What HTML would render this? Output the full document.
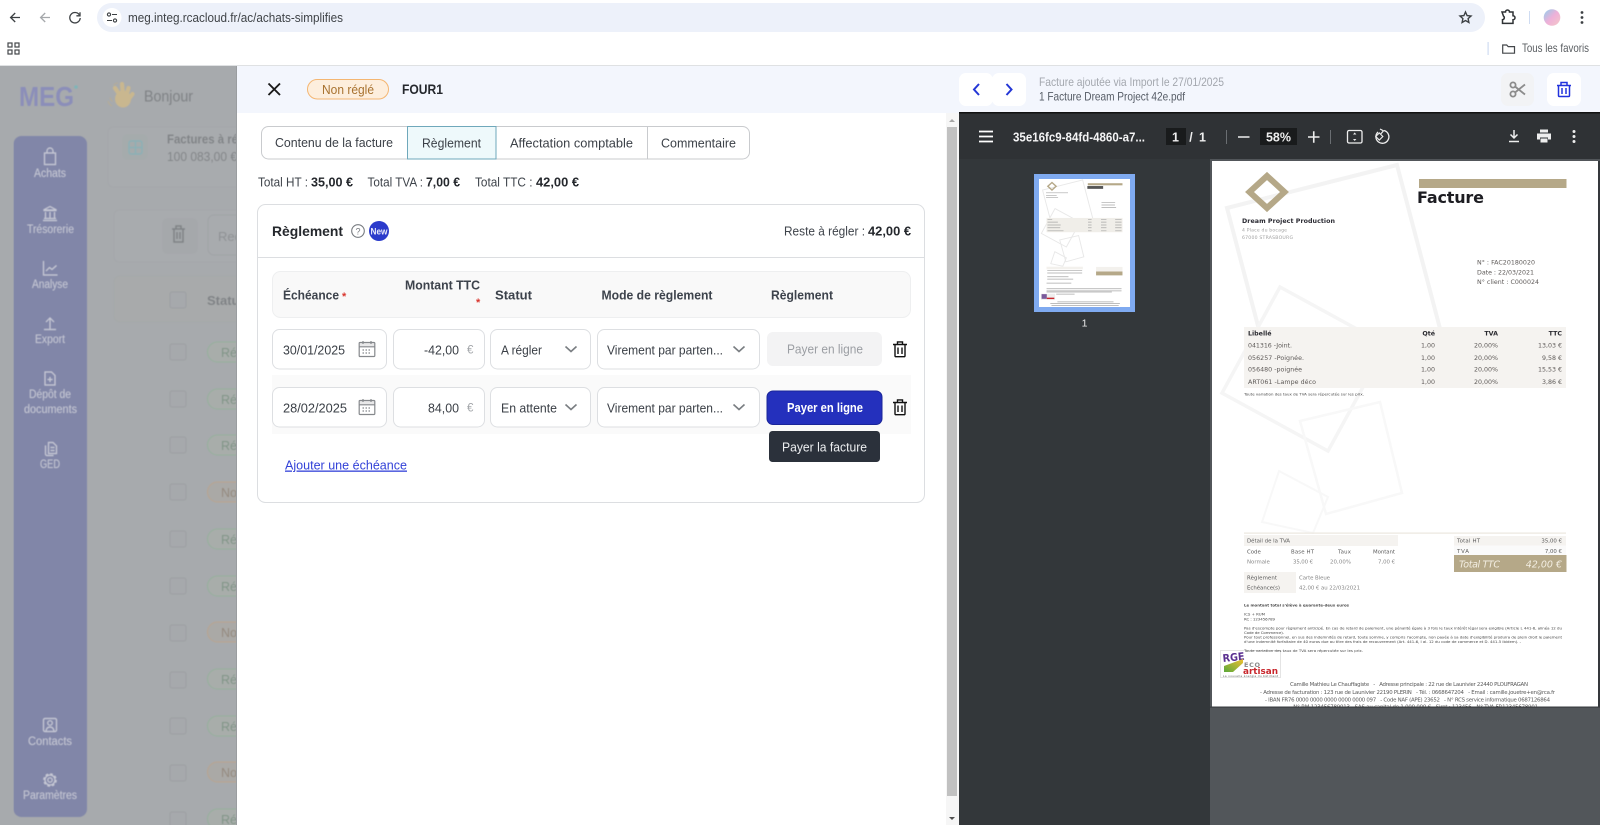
<!DOCTYPE html>
<html lang="fr"><head><meta charset="utf-8"><title>MEG - Achats simplifiés</title>
<style>
html,body{margin:0;padding:0;width:1600px;height:825px;overflow:hidden;background:#fff}
svg{display:block;position:absolute;left:0;top:0}
text{font-family:"Liberation Sans",sans-serif;white-space:pre}
.b{font-weight:700}
.ui{font-size:13px;fill:#3a3f46}
.th{font-size:12.5px;font-weight:700;fill:#3d434c}
.pdf text{font-family:"DejaVu Sans",sans-serif}
.p6{font-size:6.3px;fill:#5e5a58}
.p6b{font-size:6.3px;font-weight:700;fill:#2a2a30}
.p4{font-size:3.9px;fill:#444}
.p5{font-size:5.4px;fill:#5a5a5a}
.side{font-size:11.5px;fill:#c7c9d6;text-anchor:start}
.si{fill:none;stroke:#c7c9d6;stroke-width:1.2}
.gray{fill:none;stroke:#85888c;stroke-width:1.2}
</style></head>
<body>
<svg width="1600" height="825" viewBox="0 0 1600 825" xmlns="http://www.w3.org/2000/svg">
<defs><filter id="bl" x="0" y="0" width="100%" height="100%"><feGaussianBlur stdDeviation="0.55"/></filter>
<linearGradient id="av" x1="0" y1="0" x2="1" y2="1"><stop offset="0" stop-color="#8fd0ee"/><stop offset=".5" stop-color="#eeb0d8"/><stop offset="1" stop-color="#f4c8c8"/></linearGradient>
<linearGradient id="rg" x1="0" y1="1" x2="1" y2="0"><stop offset="0" stop-color="#5aa83a"/><stop offset="1" stop-color="#f0c030"/></linearGradient></defs>

<!-- browser chrome -->
<rect width="1600" height="66" fill="#fff"/>
<rect y="65" width="1600" height="1" fill="#dfe1e3"/>
<g fill="none" stroke="#3c4043" stroke-width="1.3">
<path d="M20 17.500H11M15.200 13l-4.600 4.500 4.600 4.500"/>
<path d="M50 17.500H41M45.200 13l-4.600 4.500 4.600 4.500" stroke="#a5a8ab"/>
<path d="M79.300 14.800A5.200 5.200 0 1 0 80.200 18M80 12.200v3.600h-3.600"/>
</g>
<rect x="97" y="3" width="1388" height="29" rx="14.500" fill="#edf1fa"/>
<circle cx="112" cy="17.500" r="9.500" fill="#fff"/>
<g fill="none" stroke="#3c4043" stroke-width="1.100"><circle cx="109" cy="14.500" r="1.600"/><path d="M112 14.500h5M107 20.500h5"/><circle cx="115" cy="20.500" r="1.600"/></g>
<text x="128" y="22" font-size="13" fill="#3f4347" textLength="215" lengthAdjust="spacingAndGlyphs">meg.integ.rcacloud.fr/ac/achats-simplifies</text>
<path d="M1465.500 12l1.600 3.600 3.900.4-2.900 2.600.8 3.900-3.400-2-3.400 2 .8-3.900-2.900-2.600 3.900-.4z" fill="none" stroke="#3c4043" stroke-width="1.400"/>
<path d="M1502 12h3.500a2 2 0 0 1 4 0h3.500v3.700a2 2 0 0 1 0 4v3.700h-10.500v-3.700a2 2 0 0 0 1-3.600z" fill="none" stroke="#2f3235" stroke-width="1.500"/>
<rect x="1529" y="11" width="1" height="13" fill="#cfdcf2"/>
<circle cx="1552" cy="17.500" r="8.300" fill="url(#av)"/>
<g fill="#3c4043"><circle cx="1582" cy="12.500" r="1.400"/><circle cx="1582" cy="17.500" r="1.400"/><circle cx="1582" cy="22.500" r="1.400"/></g>
<g fill="none" stroke="#44474a" stroke-width="1.200"><rect x="8" y="43" width="4" height="4"/><rect x="15" y="43" width="4" height="4"/><rect x="8" y="50" width="4" height="4"/><rect x="15" y="50" width="4" height="4"/></g>
<rect x="1487.500" y="42" width="1.200" height="13" fill="#cfdcf2"/>
<path d="M1502.700 45h4l1.500 1.600h6.300v6.600h-11.800z" fill="none" stroke="#44474a" stroke-width="1.200"/>
<text x="1522" y="52" font-size="12" fill="#5a5e62" textLength="67" lengthAdjust="spacingAndGlyphs">Tous les favoris</text>

<!-- dimmed app behind -->
<rect y="66" width="238" height="759" fill="#a7aaad"/>
<g filter="url(#bl)">
<text x="19" y="106" font-size="28" font-weight="700" fill="#8b8eb9" textLength="55" lengthAdjust="spacingAndGlyphs">MEG</text>
<circle cx="76" cy="87" r="1.800" fill="#7fb5b8"/>
<g stroke="#c9b78f" stroke-linecap="round" stroke-width="4.200" fill="none"><path d="M122 98L115 88M123 96L122 84M126 97L128.500 88M128 100L132.500 94"/></g>
<ellipse cx="123" cy="99" rx="8" ry="8.500" fill="#c9b78f"/>
<path d="M108 101c.5 2.500 2 4 4 5M110 97.500c.5 2 1.200 3 2.500 4M118 83c-2 .2-3.500 1-4.500 2.500" fill="none" stroke="#b6ac95" stroke-width="1"/>
<text x="144" y="101.500" font-size="16" fill="#7f8285" textLength="49" lengthAdjust="spacingAndGlyphs">Bonjour</text>
<rect x="108" y="127" width="140" height="60" rx="5" fill="#a8abae" stroke="#a4a7aa"/>
<rect x="122" y="134" width="26" height="26" rx="6" fill="#a5abac"/>
<g fill="none" stroke="#8ab0b6" stroke-width="1.400"><rect x="129" y="141" width="13" height="13" rx="2"/><path d="M129 147.500h13M135.500 141v13"/></g>
<text x="167" y="143.500" font-size="13" font-weight="700" fill="#808386" textLength="71" lengthAdjust="spacingAndGlyphs">Factures à ré</text>
<text x="167" y="161" font-size="13" fill="#808386" textLength="70" lengthAdjust="spacingAndGlyphs">100 083,00 €</text>
<rect x="114" y="210" width="130" height="52" rx="5" fill="#a8abae" stroke="#a4a7aa"/>
<rect x="162" y="218" width="36" height="36" rx="6" fill="#a5a8ab"/>
<g fill="none" stroke="#7f8285" stroke-width="1.500"><path d="M172 229h13M174 229v13h9v-13M176 229v-3h5v3M177 232v7M180 232v7"/></g>
<rect x="208" y="215" width="60" height="40" rx="6" fill="#a8abae" stroke="#a0a3a6"/>
<text x="218" y="241" font-size="13" fill="#8e9194">Rec</text>
<rect x="114" y="276" width="130" height="46" rx="6" fill="#a8aaab" stroke="#a5a8a9"/>
<rect x="170" y="292" width="16" height="16" rx="2" fill="#a6a9ac" stroke="#9c9fa2"/>
<text x="207" y="305" font-size="13" font-weight="700" fill="#7f8285">Statut</text>
<g fill="#a6a9ac" stroke="#9c9fa2">
<rect x="170" y="344" width="16" height="16" rx="2"/><rect x="170" y="391" width="16" height="16" rx="2"/><rect x="170" y="437" width="16" height="16" rx="2"/><rect x="170" y="484" width="16" height="16" rx="2"/><rect x="170" y="531" width="16" height="16" rx="2"/><rect x="170" y="578" width="16" height="16" rx="2"/><rect x="170" y="625" width="16" height="16" rx="2"/><rect x="170" y="672" width="16" height="16" rx="2"/><rect x="170" y="718" width="16" height="16" rx="2"/><rect x="170" y="765" width="16" height="16" rx="2"/><rect x="170" y="812" width="16" height="16" rx="2"/>
</g>
<g fill="#a8adaa" stroke="#95b09c">
<rect x="207.500" y="342" width="60" height="20" rx="10"/><rect x="207.500" y="389" width="60" height="20" rx="10"/><rect x="207.500" y="435" width="60" height="20" rx="10"/><rect x="207.500" y="529" width="60" height="20" rx="10"/><rect x="207.500" y="576" width="60" height="20" rx="10"/><rect x="207.500" y="669" width="60" height="20" rx="10"/><rect x="207.500" y="716" width="60" height="20" rx="10"/><rect x="207.500" y="809" width="60" height="20" rx="10"/>
</g>
<g fill="#aaa9a6" stroke="#b9a48f">
<rect x="207.500" y="482" width="60" height="20" rx="10"/><rect x="207.500" y="622" width="60" height="20" rx="10"/><rect x="207.500" y="762" width="60" height="20" rx="10"/>
</g>
<g font-size="12.500" fill="#7f9486">
<text x="221" y="357">Ré</text><text x="221" y="404">Ré</text><text x="221" y="450">Ré</text><text x="221" y="544">Ré</text><text x="221" y="591">Ré</text><text x="221" y="684">Ré</text><text x="221" y="731">Ré</text><text x="221" y="824">Ré</text>
</g>
<g font-size="12.500" fill="#94897d"><text x="221" y="497">No</text><text x="221" y="637">No</text><text x="221" y="777">No</text></g>

<rect x="13.500" y="136" width="73.500" height="681" rx="8" fill="#8186a8"/>
<g class="si">
<path d="M44.500 153h11v11.500h-11zM47 153v-2a3 3 0 0 1 6 0v2"/>
<path d="M50 206.500l6.500 3.500h-13zM45.500 212v6M50 212v6M54.500 212v6M43.500 210.500h13M44 218.500h12M43 220.500h14"/>
<path d="M43.500 261v14h14M46 271l3.500-3.500 2.500 2 4.500-4"/>
<path d="M50 330v-12M46 322l4-4 4 4M44 329.500h12"/>
<path d="M45 372h6.500l3.500 3.500v9.500h-10zM50 377v5M47.500 379.500h5"/>
<path d="M48.500 442.500h4.500l3.500 3.500v7.500h-8zM45.500 445.500v8.500a1.500 1.500 0 0 0 1.500 1.500h6.500M50.500 447.500h4M50.500 450.500h4"/>
<rect x="43.500" y="718.500" width="13" height="13" rx="1.500"/><circle cx="50" cy="723" r="2.300"/><path d="M46 731c.5-3 2-4 4-4s3.500 1 4 4"/>
<circle cx="50" cy="780" r="2.200"/><circle cx="50" cy="780" r="5"/><circle cx="50" cy="780" r="6" stroke-width="1.600" stroke-dasharray="2.600 2.110"/>
</g>
<g class="side">
<text x="34" y="177" textLength="32" lengthAdjust="spacingAndGlyphs">Achats</text>
<text x="27" y="233" textLength="47" lengthAdjust="spacingAndGlyphs">Trésorerie</text>
<text x="32" y="288" textLength="36" lengthAdjust="spacingAndGlyphs">Analyse</text>
<text x="35" y="343" textLength="30" lengthAdjust="spacingAndGlyphs">Export</text>
<text x="29" y="398" textLength="42" lengthAdjust="spacingAndGlyphs">Dépôt de</text>
<text x="24" y="413" textLength="53" lengthAdjust="spacingAndGlyphs">documents</text>
<text x="40" y="468" textLength="20" lengthAdjust="spacingAndGlyphs">GED</text>
<text x="28" y="745" textLength="44" lengthAdjust="spacingAndGlyphs">Contacts</text>
<text x="23" y="799" textLength="54" lengthAdjust="spacingAndGlyphs">Paramètres</text>
</g>
</g>

<!-- modal -->
<rect x="237" y="66" width="722" height="759" fill="#fff"/>
<rect x="237" y="66" width="1363" height="47" fill="#f3f6fd"/>
<path d="M268.500 83.500l11.500 11.500M280 83.500l-11.500 11.500" stroke="#1a1a1a" stroke-width="1.900" fill="none"/>
<rect x="307.500" y="79.500" width="81" height="19.500" rx="9.700" fill="#fdeedd" stroke="#f4b672"/>
<text x="322" y="94" font-size="12.500" fill="#a8722f" textLength="52" lengthAdjust="spacingAndGlyphs">Non réglé</text>
<text x="402" y="94" font-size="14" font-weight="700" fill="#25282d" textLength="41" lengthAdjust="spacingAndGlyphs">FOUR1</text>

<!-- tabs -->
<rect x="261.500" y="126.500" width="488" height="32.500" rx="7" fill="#fff" stroke="#c9cbce"/>
<rect x="407.500" y="126.500" width="88.500" height="32.500" fill="#eef9fb" stroke="#6fa8bb"/>
<path d="M647.500 127v32" stroke="#c9cbce"/>
<g font-size="12.800" fill="#3c4148">
<text x="275" y="147" textLength="118" lengthAdjust="spacingAndGlyphs">Contenu de la facture</text>
<text x="422" y="147.500" textLength="59" lengthAdjust="spacingAndGlyphs">Règlement</text>
<text x="510" y="147.500" textLength="123" lengthAdjust="spacingAndGlyphs">Affectation comptable</text>
<text x="661" y="147.500" textLength="75" lengthAdjust="spacingAndGlyphs">Commentaire</text>
</g>
<g font-size="12.500" fill="#3f444b">
<text x="258" y="186.500" textLength="50" lengthAdjust="spacingAndGlyphs">Total HT :</text>
<text x="311" y="186.500" class="b" fill="#25282d" textLength="42" lengthAdjust="spacingAndGlyphs">35,00 €</text>
<text x="367.500" y="186.500" textLength="55.500" lengthAdjust="spacingAndGlyphs">Total TVA :</text>
<text x="426" y="186.500" class="b" fill="#25282d" textLength="34" lengthAdjust="spacingAndGlyphs">7,00 €</text>
<text x="475" y="186.500" textLength="57.500" lengthAdjust="spacingAndGlyphs">Total TTC :</text>
<text x="536" y="186.500" class="b" fill="#25282d" textLength="43" lengthAdjust="spacingAndGlyphs">42,00 €</text>
</g>

<!-- card -->
<rect x="257.500" y="204.500" width="667" height="298" rx="8" fill="#fff" stroke="#dcdee1"/>
<rect x="258" y="257" width="666" height="1" fill="#dcdee1"/>
<text x="272" y="236" font-size="14" font-weight="700" fill="#25282d" textLength="71" lengthAdjust="spacingAndGlyphs">Règlement</text>
<circle cx="358" cy="231" r="6.300" fill="none" stroke="#777b80" stroke-width="1.100"/>
<text x="358" y="234.500" font-size="9" fill="#777b80" text-anchor="middle">?</text>
<circle cx="379" cy="231" r="10" fill="#2b3bcb"/>
<text x="379" y="234.500" font-size="9.500" font-weight="700" fill="#e9ebfb" text-anchor="middle" textLength="17" lengthAdjust="spacingAndGlyphs">New</text>
<text x="784" y="235.500" font-size="12.500" fill="#3f444b" textLength="81" lengthAdjust="spacingAndGlyphs">Reste à régler :</text>
<text x="868" y="235.500" font-size="12.500" font-weight="700" fill="#25282d" textLength="43" lengthAdjust="spacingAndGlyphs">42,00 €</text>

<rect x="272.500" y="271.500" width="638" height="46" rx="8" fill="#f9f9f9" stroke="#eeeff0"/>
<g class="th">
<text x="283" y="299.500" textLength="56" lengthAdjust="spacingAndGlyphs">Échéance</text>
<text x="405" y="289.500" textLength="75" lengthAdjust="spacingAndGlyphs">Montant TTC</text>
<text x="495" y="299.500" textLength="37" lengthAdjust="spacingAndGlyphs">Statut</text>
<text x="601.500" y="299.500" textLength="111" lengthAdjust="spacingAndGlyphs">Mode de règlement</text>
<text x="771" y="299.500" textLength="62" lengthAdjust="spacingAndGlyphs">Règlement</text>
</g>
<text x="342" y="300" font-size="11" fill="#d9362f" font-weight="700">*</text>
<text x="476" y="306" font-size="11" fill="#d9362f" font-weight="700">*</text>

<rect x="272" y="375" width="639" height="59" fill="#fafafa"/>
<g fill="#fff" stroke="#dddfe2">
<rect x="272.500" y="329.500" width="114" height="39.500" rx="7"/>
<rect x="393.500" y="329.500" width="91" height="39.500" rx="7"/>
<rect x="490.500" y="329.500" width="100" height="39.500" rx="7"/>
<rect x="597.500" y="329.500" width="162" height="39.500" rx="7"/>
<rect x="272.500" y="387.500" width="114" height="39.500" rx="7"/>
<rect x="393.500" y="387.500" width="91" height="39.500" rx="7"/>
<rect x="490.500" y="387.500" width="100" height="39.500" rx="7"/>
<rect x="597.500" y="387.500" width="162" height="39.500" rx="7"/>
</g>
<g class="ui">
<text x="283" y="354.500" textLength="62" lengthAdjust="spacingAndGlyphs">30/01/2025</text>
<text x="283" y="412.500" textLength="64" lengthAdjust="spacingAndGlyphs">28/02/2025</text>
<text x="424" y="354.500" textLength="35" lengthAdjust="spacingAndGlyphs">-42,00</text>
<text x="428" y="412.500" textLength="31" lengthAdjust="spacingAndGlyphs">84,00</text>
<text x="501" y="354.500" textLength="41" lengthAdjust="spacingAndGlyphs">A régler</text>
<text x="501" y="412.500" textLength="56" lengthAdjust="spacingAndGlyphs">En attente</text>
<text x="607" y="354.500" textLength="116" lengthAdjust="spacingAndGlyphs">Virement par parten...</text>
<text x="607" y="412.500" textLength="116" lengthAdjust="spacingAndGlyphs">Virement par parten...</text>
</g>
<text x="467" y="353.500" font-size="11.500" fill="#a4a7ab">€</text>
<text x="467" y="411.500" font-size="11.500" fill="#a4a7ab">€</text>
<rect x="360" y="343" width="14.500" height="4" fill="#e8e8e9"/><rect x="360" y="401" width="14.500" height="4" fill="#e8e8e9"/>
<g class="gray">
<path d="M360 342.500h14a.8.8 0 0 1 .8.8v12.400a.8.8 0 0 1-.8.8h-14a.8.8 0 0 1-.8-.8v-12.400a.8.8 0 0 1 .8-.8zM359.300 346.800h15.400M363 341v3M371 341v3"/>
<path d="M360 400.500h14a.8.8 0 0 1 .8.8v12.400a.8.8 0 0 1-.8.8h-14a.8.8 0 0 1-.8-.8v-12.400a.8.8 0 0 1 .8-.8zM359.300 404.800h15.400M363 399v3M371 399v3"/>
<path d="M362.500 350h9M362.500 353h9M362.500 408h9M362.500 411h9" stroke-dasharray="1.500 1.500"/>
</g>
<g fill="none" stroke="#7a7e82" stroke-width="1.600">
<path d="M565.500 346.500l5.500 5 5.500-5M565.500 404.500l5.500 5 5.500-5M733.500 346.500l5.500 5 5.500-5M733.500 404.500l5.500 5 5.500-5"/>
</g>
<rect x="767" y="332" width="115" height="34" rx="6" fill="#f3f3f4"/>
<text x="787" y="353.500" font-size="12.500" fill="#9b9ea3" textLength="76" lengthAdjust="spacingAndGlyphs">Payer en ligne</text>
<rect x="767" y="391" width="115" height="33.500" rx="6" fill="#2430bd" stroke="#1a2599"/>
<text x="787" y="412" font-size="12.500" font-weight="700" fill="#fff" textLength="76" lengthAdjust="spacingAndGlyphs">Payer en ligne</text>
<rect x="769" y="431" width="111" height="31" rx="3.500" fill="#2b313b"/>
<text x="782" y="451.500" font-size="12.500" fill="#eceef0" textLength="85" lengthAdjust="spacingAndGlyphs">Payer la facture</text>
<g fill="none" stroke="#111" stroke-width="1.400">
<path d="M893 344.500h14M895 344.500v11.200a1 1 0 0 0 1 1h8a1 1 0 0 0 1-1v-11.200M897.500 344.500v-2.600h5v2.600M898 347.500v6.500M902 347.500v6.500"/>
<path d="M893 402.500h14M895 402.500v11.200a1 1 0 0 0 1 1h8a1 1 0 0 0 1-1v-11.200M897.500 402.500v-2.600h5v2.600M898 405.500v6.500M902 405.500v6.500"/>
</g>
<text x="285" y="469.500" font-size="13" fill="#3342d8" text-decoration="underline" textLength="122" lengthAdjust="spacingAndGlyphs">Ajouter une échéance</text>

<!-- scrollbar -->
<rect x="946" y="113" width="13" height="712" fill="#f6f6f6"/>
<rect x="947" y="127" width="10" height="669" fill="#c1c1c1"/>
<path d="M949 122l3-3 3 3z" fill="#a6a6a6"/><path d="M949 817l3 3 3-3z" fill="#505050"/>

<!-- right header -->
<rect x="959" y="73" width="34" height="33" rx="7" fill="#fff"/><rect x="992" y="73" width="34" height="33" rx="7" fill="#fff"/>
<path d="M979 84l-5 5.500 5 5.500M1006.500 84l5 5.500-5 5.500" fill="none" stroke="#2437d6" stroke-width="2"/>
<text x="1039" y="86" font-size="12" fill="#a3a7ae" textLength="185" lengthAdjust="spacingAndGlyphs">Facture ajoutée via Import le 27/01/2025</text>
<text x="1039" y="100.500" font-size="12" fill="#565c66" textLength="146" lengthAdjust="spacingAndGlyphs">1 Facture Dream Project 42e.pdf</text>
<rect x="1501" y="73" width="33" height="33" rx="7" fill="#f2f3f5"/>
<g fill="none" stroke="#8c8c8c" stroke-width="1.800"><circle cx="1513" cy="85" r="2.600"/><circle cx="1513" cy="94" r="2.600"/><path d="M1515 86.500l10 8M1515 92.500l10-8"/></g>
<rect x="1547" y="73" width="34" height="33" rx="7" fill="#fff"/>
<path d="M1557 85.500h14M1558.500 85.500v10a1 1 0 0 0 1 1h9a1 1 0 0 0 1-1v-10M1561 85.500v-3h6v3M1562 88v6M1566 88v6" fill="none" stroke="#2233dd" stroke-width="1.500"/>

<!-- PDF viewer -->
<rect x="959" y="112" width="641" height="48" fill="#2f3235"/>
<rect x="959" y="112" width="641" height="1.500" fill="#111"/>
<rect x="959" y="159" width="251" height="666" fill="#33373a"/>
<rect x="1210" y="159" width="390" height="666" fill="#52565a"/>
<path d="M979 131.500h14M979 136.500h14M979 141.500h14" stroke="#fff" stroke-width="1.800"/>
<text x="1013" y="141.500" font-size="13" font-weight="700" fill="#f4f4f5" textLength="132" lengthAdjust="spacingAndGlyphs">35e16fc9-84fd-4860-a7...</text>
<rect x="1166" y="128" width="20" height="17" fill="#191b1c"/>
<g font-size="12.500" fill="#eee" font-weight="700">
<text x="1175.500" y="141.500" text-anchor="middle">1</text><text x="1191" y="141.500" text-anchor="middle">/</text><text x="1202.500" y="141.500" text-anchor="middle">1</text>
</g>
<rect x="1226" y="130" width="1" height="14" fill="#6a6e72"/>
<path d="M1238 137h11.500M1308 137h11.500M1313.750 131.200v11.600" stroke="#eee" stroke-width="1.600"/>
<rect x="1260" y="128" width="37" height="17" fill="#191b1c"/>
<text x="1278.500" y="141.500" font-size="12.500" font-weight="700" fill="#eee" text-anchor="middle">58%</text>
<rect x="1330" y="130" width="1" height="14" fill="#6a6e72"/>
<rect x="1347.500" y="130.500" width="14.500" height="12.500" rx="1.500" fill="none" stroke="#eee" stroke-width="1.300"/>
<path d="M1354.700 132.500l-1.700 2h3.400zM1354.700 141l-1.700-2h3.400z" fill="#eee"/>
<path d="M1384 130.500a6.500 6.500 0 1 1-6 1.500" fill="none" stroke="#eee" stroke-width="1.300"/><path d="M1380 129l3.500 1.800-2.500 3" fill="none" stroke="#eee" stroke-width="1.200"/><rect x="1376.800" y="134" width="5" height="5" transform="rotate(45 1379.300 136.500)" fill="none" stroke="#eee" stroke-width="1.100"/>
<path d="M1514 130v8M1510.500 134.500l3.500 3.500 3.500-3.500M1509 141.500h10" fill="none" stroke="#eee" stroke-width="1.500"/>
<path d="M1540 129.500h8v3h-8zM1537 133.500h14v6h-3v-2h-8v2h-3zM1540.500 138.500h7v4h-7z" fill="#eee"/>
<g fill="#eee"><circle cx="1574" cy="131.500" r="1.500"/><circle cx="1574" cy="136.500" r="1.500"/><circle cx="1574" cy="141.500" r="1.500"/></g>

<!-- thumbnail -->
<rect x="1034" y="174" width="101" height="138" fill="#7faaf0"/>
<rect x="1039" y="179" width="91" height="128" fill="#fff"/>
<g transform="translate(1039 179) scale(.2358 .2345) translate(-1212 -161)">
<g fill="none" stroke="#e8e8e8" stroke-width="4">
<path d="M1227 208L1397 165L1443 340L1273 383z"/>
<path d="M1280 287L1386 345L1328 451L1222 393z"/>
<path d="M1300 421L1380 402L1402 493L1326 514z"/>
<path d="M1279 471L1328 497L1313 533L1262 522z"/>
</g>
<path d="M1267 176l17.500 16-17.500 16-17.500-16z" fill="none" stroke="#b5a888" stroke-width="6"/>
<rect x="1419" y="179" width="147" height="9" fill="#b5a888"/>
<rect x="1417" y="191" width="67" height="12" fill="#555"/>
<rect x="1244" y="327" width="322" height="61" fill="#f0eee9"/>
<rect x="1454" y="555" width="112" height="17" fill="#b5a888"/>
<rect x="1454" y="536" width="112" height="19" fill="#f3f1ed"/>
<rect x="1244" y="535" width="154" height="11" fill="#f3f1ed"/>
<rect x="1220" y="650" width="60" height="27" fill="#eee"/><rect x="1223" y="652" width="22" height="20" fill="#7a5a9a"/><rect x="1245" y="667" width="32" height="6" fill="#c8262c"/>
<g stroke="#a8a8a8" stroke-width="3" fill="none">
<path d="M1242 220h93M1242 231h45M1242 239h51M1477 262h58M1477 272h57M1477 282h62"/>
<path d="M1248 333h20M1248 345h44M1248 357h56M1248 369h54M1248 382h68M1420 333h15M1420 345h15M1420 357h15M1420 369h15M1420 382h15M1475 333h23M1475 345h23M1475 357h23M1475 369h23M1475 382h23M1535 333h27M1535 345h27M1535 357h27M1535 369h27M1535 382h27"/>
<path d="M1247 551h148M1247 562h148M1247 578h90M1247 588h110M1244 605h105M1244 629h318M1244 638h318M1244 643h277M1285 652h78M1290 685h238M1260 692h295M1265 700h285"/>
</g>
</g>
<text x="1084.500" y="326.500" font-size="10.500" fill="#e8e8e8" text-anchor="middle">1</text>

<!-- PDF page -->
<rect x="1212" y="161" width="386" height="545.500" fill="#fff"/>
<rect x="1598" y="161" width="2" height="546" fill="#2e3134" opacity=".8"/>
<rect x="1210" y="706.500" width="390" height="1.200" fill="#3a3d40"/>
<g class="pdf">
<g fill="none">
<path d="M1227 208L1397 165L1443 340L1273 383z" stroke="#f3f3f3" stroke-width="4"/>
<path d="M1280 287L1386 345L1328 451L1222 393z" stroke="#f5f5f5" stroke-width="3.500"/>
<path d="M1300 421L1380 402L1402 493L1326 514z" stroke="#f8f8f8" stroke-width="2.500"/>
<path d="M1279 471L1328 497L1313 533L1262 522z" stroke="#f8f8f8" stroke-width="2"/>
</g>
<path d="M1267 176l17.500 16-17.500 16-17.500-16z" fill="none" stroke="#b5a888" stroke-width="6"/>
<rect x="1419" y="179" width="147.500" height="9" fill="#b5a888"/>
<text x="1417" y="203" font-size="16" font-weight="700" fill="#1d1d22" textLength="67">Facture</text>
<text x="1242" y="223" font-size="6.300" font-weight="700" fill="#2b2b33" textLength="93">Dream Project Production</text>
<text x="1242" y="231.500" font-size="4.600" fill="#a0a0a0" textLength="45">4 Place du bocage</text>
<text x="1242" y="239" font-size="4.600" fill="#a0a0a0" textLength="51">67000 STRASBOURG</text>
<g class="p6">
<text x="1477" y="264.500" textLength="58">N° : FAC20180020</text>
<text x="1477" y="274.500" textLength="57">Date : 22/03/2021</text>
<text x="1477" y="284" textLength="62">N° client : C000024</text>
</g>
<rect x="1244" y="327" width="322" height="61" fill="#f5f3f0"/>
<g class="p6b" text-anchor="end">
<text x="1248" y="335.500" text-anchor="start">Libellé</text><text x="1435" y="335.500">Qté</text><text x="1498" y="335.500">TVA</text><text x="1562" y="335.500">TTC</text>
</g>
<g class="p6">
<text x="1248" y="347.500" textLength="44">041316 -Joint.</text>
<text x="1248" y="360" textLength="56">056257 -Poignée.</text>
<text x="1248" y="371.500" textLength="54">056480 -poignée</text>
<text x="1248" y="384" textLength="68">ART061 -Lampe déco</text>
</g>
<g class="p6" text-anchor="end">
<text x="1435" y="347.500">1,00</text><text x="1498" y="347.500">20,00%</text><text x="1562" y="347.500">13,03 €</text>
<text x="1435" y="360">1,00</text><text x="1498" y="360">20,00%</text><text x="1562" y="360">9,58 €</text>
<text x="1435" y="371.500">1,00</text><text x="1498" y="371.500">20,00%</text><text x="1562" y="371.500">15,53 €</text>
<text x="1435" y="384">1,00</text><text x="1498" y="384">20,00%</text><text x="1562" y="384">3,86 €</text>
</g>
<text x="1244" y="395.500" class="p4" textLength="120">Toute variation des taux de TVA sera répercutée sur les prix.</text>

<rect x="1244" y="532.500" width="322" height="1.200" fill="#ebe7df"/>
<rect x="1244" y="535" width="154" height="11" fill="#f5f3f0"/>
<rect x="1454" y="536" width="112" height="9.500" fill="#f5f3f0"/>
<rect x="1454" y="545.500" width="112" height="9.500" fill="#fafafa"/>
<rect x="1454" y="555" width="112.500" height="17" fill="#b5a888"/>
<rect x="1244" y="572" width="52" height="21" fill="#f5f3f0"/>
<g class="p5">
<text x="1247" y="542.700" textLength="43">Détail de la TVA</text>
<text x="1247" y="553.500">Code</text><text x="1291" y="553.500" textLength="23">Base HT</text><text x="1338" y="553.500" textLength="13">Taux</text><text x="1373" y="553.500" textLength="22">Montant</text>
<text x="1247" y="563.500" fill="#888">Normale</text><text x="1293" y="563.500" fill="#888" textLength="20">35,00 €</text><text x="1330" y="563.500" fill="#888" textLength="21">20,00%</text><text x="1378" y="563.500" fill="#888" textLength="17">7,00 €</text>
<text x="1457" y="542.700" textLength="23">Total HT</text><text x="1562" y="542.700" text-anchor="end">35,00 €</text>
<text x="1457" y="553" textLength="12">TVA</text><text x="1562" y="553" text-anchor="end">7,00 €</text>
<text x="1247" y="579.500" textLength="30">Règlement</text><text x="1299" y="579.500" fill="#888" textLength="31">Carte Bleue</text>
<text x="1247" y="589.500" textLength="33">Echéance(s)</text><text x="1299" y="589.500" fill="#888" textLength="61">42,00 € au 22/03/2021</text>
</g>
<text x="1459" y="567.500" font-size="9.500" font-style="italic" fill="#f3eee2" textLength="41">Total TTC</text>
<text x="1562" y="567.500" font-size="9.500" font-style="italic" fill="#f3eee2" text-anchor="end">42,00 €</text>
<rect x="1220.500" y="650.500" width="60" height="27" fill="#fff" stroke="#e4e4e4"/>
<text x="1223" y="662" font-size="10.500" font-weight="700" fill="#5a2f90" transform="rotate(-6 1223 662)" textLength="22" lengthAdjust="spacingAndGlyphs">RGE</text>
<path d="M1224 672v-6l19-7v4l-10 9z" fill="url(#rg)"/>
<text x="1244" y="667" font-size="6.500" font-weight="700" fill="#8a8a8a" textLength="16">ECO</text>
<text x="1243" y="674" font-size="8.500" font-weight="700" fill="#c8262c" textLength="35" lengthAdjust="spacingAndGlyphs">artisan</text>
<text x="1223" y="676.800" font-size="2.700" fill="#555" textLength="55">La nouvelle énergie du bâtiment</text>
<g class="p4">
<text x="1244" y="606.500" font-weight="700" textLength="105">Le montant total s'élève à quarante-deux euros</text>
<text x="1244" y="615.500" textLength="21">ICS + RUM</text>
<text x="1244" y="620.500" textLength="31">RC : 123456789</text>
<text x="1244" y="629.500" textLength="318" lengthAdjust="spacingAndGlyphs">Pas d'escompte pour règlement anticipé. En cas de retard de paiement, une pénalité égale à 3 fois le taux intérêt légal sera exigible (Article L 441-6, alinéa 12 du</text>
<text x="1244" y="634" textLength="40">Code de Commerce).</text>
<text x="1244" y="638.500" textLength="318" lengthAdjust="spacingAndGlyphs">Pour tout professionnel, en sus des indemnités de retard, toute somme, y compris l'acompte, non payée à sa date d'exigibilité produira de plein droit le paiement</text>
<text x="1244" y="643" textLength="277" lengthAdjust="spacingAndGlyphs">d'une indemnité forfaitaire de 40 euros due au titre des frais de recouvrement (Art. 441-6, I al. 12 du code de commerce et D. 441-5 ibidem). -</text>
<text x="1244" y="652" textLength="119">Toute variation des taux de TVA sera répercutée sur les prix.</text>
</g>
<g class="p5">
<text x="1290" y="686" textLength="238">Camille Mathieu Le Chauffagiste   -   Adresse principale : 22 rue de Launivier 22440 PLOUFRAGAN</text>
<text x="1260" y="694" textLength="295">- Adresse de facturation : 123 rue de Launivier 22190 PLERIN   - Tél. : 0668647204   - Email : camille.jouetre+en@rca.fr</text>
<text x="1265" y="701.500" textLength="285">- IBAN FR76 0000 0000 0000 0000 0000 097   - Code NAF (APE) 23652   - N° RCS service informatique 0687126864</text>
</g>
<svg x="1212" y="700" width="386" height="6.500" viewBox="1212 700 386 6.500"><text x="1290" y="708.500" class="p5" textLength="248">- N° RM 123456789013 - SAS au capital de 1 000 000 € - Siret : 123456 - N° TVA FR12345678901</text></svg>
</g>

<!-- dim strip shadow at modal edge -->
<rect x="236" y="66" width="1" height="759" fill="#9a9da0"/>
</svg>
</body></html>
